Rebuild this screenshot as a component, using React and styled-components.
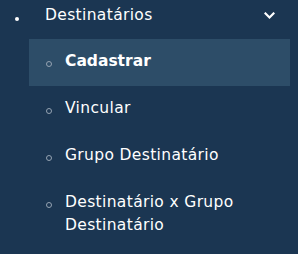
import React from 'react'
import styled, { createGlobalStyle } from 'styled-components'

const Global = createGlobalStyle`
  html, body { margin: 0; padding: 0; background: #1b3652; }
  body { font-family: "DejaVu Sans", "Liberation Sans", sans-serif; }
`

const Menu = styled.div`
  width: 298px;
  height: 254px;
  background: #1b3652;
  color: #ffffff;
  overflow: hidden;
`

const Header = styled.div`
  display: flex;
  align-items: center;
  height: 31px;
  padding: 0 23px 0 15px;
`

const Dot = styled.span`
  align-self: flex-start;
  width: 4px;
  height: 4px;
  border-radius: 50%;
  background: #ffffff;
  margin: 17px 26px 0 0;
`

const HeaderLabel = styled.span`
  flex: 1;
  font-size: 15.5px;
  line-height: 23px;
  letter-spacing: 0.35px;
`

const Chevron = () => (
  <svg width="11" height="8" viewBox="0 0 11 8">
    <polyline points="1.5,1.5 5.5,5.5 9.5,1.5" fill="none" stroke="#fff" strokeWidth="2.2" strokeLinecap="square" />
  </svg>
)

const SubList = styled.div`
  display: flex;
  flex-direction: column;
  margin: 8px 8px 0 29px;
`

const Item = styled.div`
  display: flex;
  align-items: flex-start;
  padding: 11px 0 13px 17px;
  background: ${p => (p.$active ? '#2d4d68' : 'transparent')};
  font-size: 15.5px;
  line-height: 23px;
  letter-spacing: ${p => (p.$active ? '0px' : '0.35px')};
  font-weight: ${p => (p.$active ? 700 : 400)};
`

const Ring = styled.span`
  flex: none;
  width: 4px;
  height: 4px;
  border: 1px solid #95a3b2;
  border-radius: 50%;
  margin: 11px 13px 0 0;
`

const items = ['Cadastrar', 'Vincular', 'Grupo Destinatário', 'Destinatário x Grupo Destinatário']

export default function App() {
  return (
    <Menu>
      <Global />
      <Header>
        <Dot />
        <HeaderLabel>Destinatários</HeaderLabel>
        <Chevron />
      </Header>
      <SubList>
        {items.map((t, i) => (
          <Item key={t} $active={i === 0}>
            <Ring />
            <span>{t}</span>
          </Item>
        ))}
      </SubList>
    </Menu>
  )
}
